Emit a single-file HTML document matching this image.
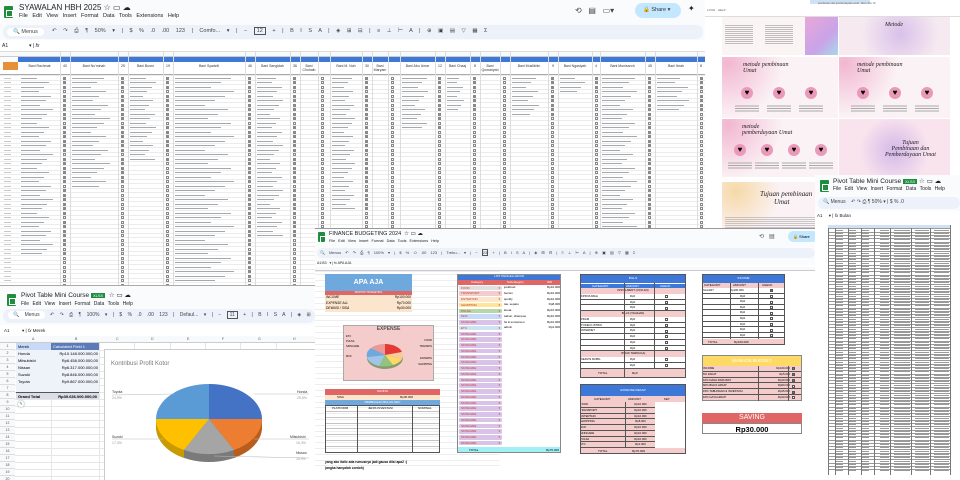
<!DOCTYPE html>
<html><head><meta charset="utf-8">
<style>
*{margin:0;padding:0;box-sizing:border-box}
body{width:960px;height:480px;overflow:hidden;background:#fff;font-family:"Liberation Sans",sans-serif;position:relative}
.abs{position:absolute}
.win{position:absolute;overflow:hidden;background:#fff}
.logo{position:absolute;width:9px;height:12px;background:#1e8e3e;border-radius:1px}
.logo:after{content:"";position:absolute;left:2px;top:4px;width:5px;height:5px;border:1px solid #fff}
.pill{position:absolute;background:#edf2fa;border-radius:8px}
.t{position:absolute;white-space:nowrap;color:#222}
.cb{position:absolute;width:3px;height:3px;border:0.5px solid #888}
.cbx{background:#8a8a8a}
</style></head><body>

<!-- TOP-LEFT SHEET -->
<div class="win" id="top" style="left:0;top:0;width:705px;height:290px;background:#f9fbfd">
 <div class="logo" style="left:4px;top:6px"></div>
 <div class="t" style="left:19px;top:3px;font-size:8px">SYAWALAN HBH 2025 ☆ ▭ ☁</div>
 <div class="t" style="left:19px;top:13px;font-size:5.5px;word-spacing:3px">File Edit View Insert Format Data Tools Extensions Help</div>
 <div class="pill" style="left:3px;top:25px;width:700px;height:14px"></div>
 <div class="t" style="left:7px;top:28px;font-size:5.5px;color:#444;background:#fff;border-radius:6px;padding:1px 6px">🔍 Menus</div>
 <div class="t" style="left:52px;top:28px;font-size:5.5px;color:#444;word-spacing:5px">↶ ↷ ⎙ ¶ 50% ▾ | $ % .0 .00 123 | Comfo... ▾ | − <span style="border:0.5px solid #555;padding:0 2px">12</span> + | B I S A | ◈ ⊞ ⊟ | ≡ ⊥ ⊢ A | ⊕ ▣ ▤ ▽ ▦ Σ</div>
 <div class="t" style="left:575px;top:6px;font-size:8px;color:#444">⟲ &nbsp; ▤ &nbsp; ▭▾</div>
 <div class="abs" style="left:635px;top:3px;width:46px;height:15px;background:#c2e7ff;border-radius:8px;font-size:5.5px;color:#333;padding:4px 0 0 8px">🔒 Share ▾</div>
 <div class="t" style="left:688px;top:4px;font-size:8px">✦</div>
 <div class="abs" style="left:0;top:40px;width:705px;height:12px;background:#fff;border-bottom:0.5px solid #ddd"></div>
 <div class="t" style="left:2px;top:43px;font-size:5px">A1 &nbsp;&nbsp;&nbsp;&nbsp;&nbsp;&nbsp;&nbsp;&nbsp;&nbsp;&nbsp;&nbsp;&nbsp;&nbsp;&nbsp;▾ | <i>fx</i></div>
 <div class="abs" style="left:0;top:52px;width:705px;height:5px;background:#f8f9fa;border-bottom:0.5px solid #ccc"></div>
 <div class="abs" style="left:18px;top:57px;width:687px;height:5px;background:#3d78d8"></div>
 <div class="abs" style="left:0;top:62px;width:705px;height:13px;background:#fff;border-bottom:0.5px solid #aaa"></div>
 <div class="abs" style="left:3px;top:62px;width:15px;height:8px;background:#e69138"></div>
 <div class="abs" style="left:0;top:75px;width:705px;height:215px;background:#fff"></div>
 <div id="topgrid"></div>
</div>

<!-- RIGHT IMAGES -->
<div class="win" style="left:705px;top:0;width:255px;height:240px;background:#fff">
 <div class="abs" style="left:0;top:0;width:255px;height:17px;background:#fff;border-bottom:0.5px solid #ddd"></div>
 <div class="t" style="left:2px;top:8px;font-size:3px;color:#666">LOUD &nbsp; HELP</div>
 <div class="abs" style="left:105px;top:0;width:60px;height:4px;background:#cfe2f3"></div>
 <div class="t" style="left:113px;top:2px;font-size:2.5px;color:#666">pembinaan dan pemberdayaan umat · Menu Pro 18</div>
 <div class="abs" style="left:17px;top:17px;width:83px;height:38px;background:#fbf4f5"></div>
 <div class="abs" style="left:100px;top:17px;width:33px;height:38px;background:linear-gradient(135deg,#e9a8d8,#c9a3e8 60%,#a8d8e8)"></div>
 <div class="abs" style="left:134px;top:17px;width:111px;height:38px;background:radial-gradient(circle at 55% 45%,#d9c0ea,#f6eaf0 60%)"></div>
 <div class="abs" style="left:17px;top:57px;width:116px;height:61px;background:radial-gradient(circle at 5% 10%,#f2b7d0,#fbf2f5 45%)"></div>
 <div class="abs" style="left:134px;top:57px;width:111px;height:61px;background:radial-gradient(circle at 5% 10%,#f2b7d0,#fbf2f5 45%)"></div>
 <div class="abs" style="left:17px;top:119px;width:116px;height:58px;background:radial-gradient(circle at 5% 10%,#f2b7d0,#fbf2f5 45%)"></div>
 <div class="abs" style="left:134px;top:119px;width:111px;height:58px;background:radial-gradient(circle at 50% 55%,#d4b8e8,#f9e4ee 55%)"></div>
 <div class="abs" style="left:17px;top:182px;width:116px;height:48px;background:radial-gradient(circle at 12% 20%,#f6d9a8,#fbf2f5 40%)"></div>
 <div id="hearts"></div>
 <div class="t" style="left:38px;top:62px;font-size:6px;font-style:italic;font-family:'Liberation Serif',serif">metode pembinaan<br>Umat</div>
 <div class="t" style="left:152px;top:62px;font-size:6px;font-style:italic;font-family:'Liberation Serif',serif">metode pembinaan<br>Umat</div>
 <div class="t" style="left:37px;top:124px;font-size:6px;font-style:italic;font-family:'Liberation Serif',serif">metode<br>pemberdayaan Umat</div>
 <div class="t" style="left:180px;top:140px;font-size:6px;font-style:italic;font-family:'Liberation Serif',serif;text-align:center">Tujuan<br>Pembinaan dan<br>Pemberdayaan Umat</div>
 <div class="t" style="left:55px;top:190px;font-size:7px;font-style:italic;font-family:'Liberation Serif',serif">Tujuan pembinaan<br>&nbsp;&nbsp;&nbsp;&nbsp;&nbsp;&nbsp;&nbsp;&nbsp;Umat</div>
 <div class="t" style="left:180px;top:22px;font-size:6px;font-style:italic;font-family:'Liberation Serif',serif">Metode</div>
</div>

<!-- RIGHT PIVOT -->
<div class="win" style="left:815px;top:175px;width:145px;height:305px;background:#f9fbfd">
 <div class="logo" style="left:5px;top:5px"></div>
 <div class="t" style="left:18px;top:2px;font-size:6.5px">Pivot Table Mini Course <span style="background:#1e8e3e;color:#fff;font-size:4px;padding:0 2px">XLSX</span> ☆ ▭ ☁</div>
 <div class="t" style="left:18px;top:11px;font-size:5px;word-spacing:2px">File Edit View Insert Format Data Tools Help</div>
 <div class="pill" style="left:3px;top:22px;width:142px;height:12px"></div>
 <div class="t" style="left:8px;top:24px;font-size:5px;color:#444">🔍 Menus &nbsp;&nbsp; ↶ ↷ ⎙ ¶ 50% ▾ | $ % .0</div>
 <div class="abs" style="left:0;top:36px;width:145px;height:10px;background:#fff"></div>
 <div class="t" style="left:2px;top:38px;font-size:4.5px">A1 &nbsp;&nbsp;&nbsp;&nbsp;▾ | <i>fx</i> Bulan</div>
 <div class="abs" style="left:0;top:46px;width:145px;height:259px;background:#fff"></div>
 <div id="rp" class="abs" style="left:13px;top:50px;width:132px;height:255px"></div>
</div>

<!-- FINANCE -->
<div class="win" style="left:315px;top:228px;width:500px;height:252px;background:#fff;border-top:1px solid #999">
 <div class="abs" style="left:0;top:0;width:500px;height:36px;background:#f9fbfd"></div>
 <div class="logo" style="left:3px;top:3px;width:7px;height:10px"></div>
 <div class="t" style="left:14px;top:2px;font-size:5.5px">FINANCE BUDGETING 2024 &nbsp;☆ ▭ ☁</div>
 <div class="t" style="left:14px;top:10px;font-size:3.8px;word-spacing:2px">File Edit View Insert Format Data Tools Extensions Help</div>
 <div class="t" style="left:444px;top:4px;font-size:6px;color:#555">⟲ &nbsp; ▤</div>
 <div class="abs" style="left:473px;top:2px;width:30px;height:11px;background:#c2e7ff;border-radius:6px;font-size:4px;padding:3px 0 0 5px">🔒 Share</div>
 <div class="pill" style="left:2px;top:19px;width:498px;height:10px"></div>
 <div class="t" style="left:5px;top:21px;font-size:4px;color:#444;word-spacing:3px">🔍 Menus ↶ ↷ ⎙ ¶ 100% ▾ | $ % .0 .00 123 | Trebu... ▾ | − <span style="border:0.5px solid #555">23</span> + | B I S A | ◈ ⊞ ⊟ | ≡ ⊥ ⊢ A | ⊕ ▣ ▤ ▽ ▦ Σ</div>
 <div class="t" style="left:2px;top:32px;font-size:3.5px">A1:B3 &nbsp;&nbsp;▾ | fx APA AJA</div>
 <div class="abs" style="left:0;top:38px;width:500px;height:4px;background:#f8f9fa;border-bottom:0.5px solid #ccc"></div>
 <div id="fin"></div>
</div>

<!-- BOTTOM-LEFT PIVOT -->
<div class="win" style="left:0;top:285px;width:315px;height:195px;background:#f9fbfd;border-top:1px solid #aaa">
 <div class="logo" style="left:7px;top:8px"></div>
 <div class="t" style="left:21px;top:5px;font-size:6.5px">Pivot Table Mini Course <span style="background:#1e8e3e;color:#fff;font-size:4px;padding:0 2px">XLSX</span> &nbsp;☆ ▭ ☁</div>
 <div class="t" style="left:21px;top:15px;font-size:5px;word-spacing:2px">File Edit View Insert Format Data Tools Help</div>
 <div class="pill" style="left:3px;top:23px;width:312px;height:14px"></div>
 <div class="t" style="left:8px;top:26px;font-size:5px;color:#444;word-spacing:4px"><span style="background:#fff;border-radius:5px;padding:1px 5px">🔍 Menus</span> ↶ ↷ ⎙ ¶ 100% ▾ | $ % .0 .00 123 | Defaul... ▾ | − <span style="border:0.5px solid #555;padding:0 2px">11</span> + | B I S A | ◈ ⊞</div>
 <div class="abs" style="left:0;top:39px;width:315px;height:11px;background:#fff"></div>
 <div class="t" style="left:4px;top:42px;font-size:4.5px">A1 &nbsp;&nbsp;&nbsp;&nbsp;&nbsp;&nbsp;&nbsp;&nbsp;&nbsp;▾ | <i>fx</i> Merek</div>
 <div class="abs" style="left:0;top:50px;width:315px;height:7px;background:#f8f9fa;border-bottom:0.5px solid #ccc;font-size:3.5px;color:#555">
  <span class="abs" style="left:32px;top:1px">A</span><span class="abs" style="left:75px;top:1px">B</span><span class="abs" style="left:116px;top:1px">C</span><span class="abs" style="left:151px;top:1px">D</span><span class="abs" style="left:187px;top:1px">E</span><span class="abs" style="left:222px;top:1px">F</span><span class="abs" style="left:258px;top:1px">G</span><span class="abs" style="left:293px;top:1px">H</span></div>
 <div id="bl" class="abs" style="left:0;top:57px;width:315px;height:138px;background:#fff"></div>
 <div class="abs" style="left:16px;top:57px;width:35px;height:7px;background:#c9daf8;font-size:4px;padding:1px 2px">Merek</div>
 <div class="abs" style="left:51px;top:57px;width:48px;height:7px;background:#5b7bb8;color:#fff;font-size:4px;padding:1px 2px">Calculated Field 1</div>
 <div class="abs" style="left:16px;top:64px;width:83px;height:42px;background:#eef2f9;font-size:4px;line-height:7px;padding-left:2px">Honda<br>Mitsubishi<br>Nissan<br>Suzuki<br>Toyota</div>
 <div class="abs" style="left:51px;top:64px;width:48px;height:42px;font-size:4px;line-height:7px;text-align:right;padding-right:1px">Rp10.148.000.000,00<br>Rp6.458.000.000,00<br>Rp6.317.000.000,00<br>Rp8.846.000.000,00<br>Rp9.867.000.000,00</div>
 <div class="abs" style="left:16px;top:106px;width:83px;height:7px;background:#d9dee7;border-top:1px solid #555;font-size:4px;font-weight:bold;padding:1px 2px">Grand Total<span style="float:right">Rp39.636.000.000,00</span></div>
 <div class="abs" style="left:18px;top:115px;width:6px;height:6px;border-radius:3px;background:#fff;box-shadow:0 0 2px #888;font-size:4px;color:#1e8e3e;text-align:center">✎</div>
 <div class="abs" style="left:104px;top:63px;width:212px;height:132px;background:#fff;border:0.7px solid #ccc"></div>
 <div class="t" style="left:111px;top:75px;font-size:6px;color:#777">Kontribusi Profit Kotor</div>
 <svg class="abs" style="left:104px;top:63px" width="212" height="132" viewBox="0 0 212 132">
  <g transform="translate(105,70)">
   <path d="M-53,0 L-53,8 A53,35 0 0 0 53,8 L53,0 Z" fill="#7a7a7a"/>
   <path d="M-53,0 L-53,8 A53,35 0 0 0 -25,39 L-25,31 Z" fill="#c99b00"/>
   <path d="M25,31 L25,39 A53,35 0 0 0 53,8 L53,0 Z" fill="#b85d1e"/>
   <path d="M0,0 L0,-35 A53,35 0 0 1 53,0 Z" fill="#4472c4"/>
   <path d="M0,0 L53,0 A53,35 0 0 1 25,31 Z" fill="#ed7d31"/>
   <path d="M0,0 L25,31 A53,35 0 0 1 -25,31 Z" fill="#a5a5a5"/>
   <path d="M0,0 L-25,31 A53,35 0 0 1 -53,0 Z" fill="#ffc000"/>
   <path d="M0,0 L-53,0 A53,35 0 0 1 0,-35 Z" fill="#5b9bd5"/>
  </g>
  <g stroke="#bbb" stroke-width="0.6"><line x1="8" y1="46" x2="70" y2="45"/><line x1="150" y1="45" x2="205" y2="45"/><line x1="8" y1="90" x2="60" y2="90"/><line x1="150" y1="90" x2="205" y2="90"/><line x1="110" y1="107" x2="205" y2="109"/></g>
  <g font-size="3.5" fill="#333" font-family="Liberation Sans"><text x="8" y="44">Toyota</text><text x="8" y="50" fill="#999">24,9%</text><text x="193" y="44">Honda</text><text x="193" y="50" fill="#999">25,6%</text><text x="8" y="89">Suzuki</text><text x="8" y="95" fill="#999">17,3%</text><text x="186" y="89">Mitsubishi</text><text x="192" y="95" fill="#999">16,3%</text><text x="192" y="105">Nissan</text><text x="192" y="111" fill="#999">15,9%</text></g>
 </svg>
</div>

<script>
function el(p,css,html,cls){var d=document.createElement('div');d.className=cls||'abs';d.style.cssText=css;if(html!=null)d.innerHTML=html;p.appendChild(d);return d;}
var tg=document.getElementById('topgrid');
var cols=[[19,60,0],[60,70,1],[70,118,0],[118,128,1],[128,163,0],[163,173,1],[173,245,0],[245,255,1],[255,290,0],[290,300,1],[300,318,0],[318,330,1],[330,362,0],[362,372,1],[372,388,0],[388,400,1],[400,435,0],[435,445,1],[445,470,0],[470,480,1],[480,500,0],[500,510,1],[510,548,0],[548,558,1],[558,592,0],[592,600,1],[600,645,0],[645,655,1],[655,697,0],[697,705,1]];
var counts=[40,25,19,46,36,0,30,0,12,8,0,9,4,45,8];
var hdr=['Bani Rachmat','Bani Nu\'minah','Bani Busro','Bani Syadzili','Bani Sangidah','Bani Chuhaih','Bani M. Nuh','Bani Maryam','Bani Abu Umar','Bani Chaaj','Bani Qomariyah','Bani Muslikhin','Bani Ngasiyah','Bani Munisaroh','Bani Ibrah'];
for(var r=0;r<47;r++){el(tg,'left:0;top:'+(75+r*4.5)+'px;width:705px;height:0.4px;background:#ececec');el(tg,'left:4px;top:'+(76+r*4.5+1.5)+'px;width:7px;height:1px;background:#c8c8c8');}
for(var i=0;i<cols.length;i++){var c=cols[i];
 el(tg,'left:'+c[1]+'px;top:52px;width:0.5px;height:238px;background:#ddd');
 var k=Math.floor(i/2);
 if(!c[2]){el(tg,'left:'+c[0]+'px;top:64px;width:'+(c[1]-c[0])+'px;font-size:3.5px;text-align:center;color:#333',hdr[k]);}
 else el(tg,'left:'+c[0]+'px;top:64px;width:'+(c[1]-c[0])+'px;font-size:3.5px;text-align:center;color:#333',String(counts[k]||''));
 for(var r=0;r<47;r++){var y=76+r*4.5;
  if(c[2]){var on=r<counts[k];el(tg,'left:'+(c[0]+3)+'px;top:'+(y+0.5)+'px',null,'cb'+(on&&(r%7!=3)?' cbx':''));}
  else if(r<counts[k]){var w=(c[1]-c[0]-6)*(0.45+0.5*((r*37+i*13)%10)/10);el(tg,'left:'+(c[0]+2)+'px;top:'+(y+1.6)+'px;width:'+w+'px;height:1px;background:#a4a9af');}
 }}
var h=document.getElementById('hearts');
[[42,95],[74,95],[106,95],[158,95],[190,95],[222,95],[35,152],[62,152],[89,152],[116,152]].forEach(function(p){el(h,'left:'+(p[0]-6)+'px;top:'+(p[1]-8)+'px;width:12px;height:12px;border-radius:6px;background:#ea9ab8;font-size:8px;text-align:center;line-height:12px','♥');el(h,'left:'+(p[0]-12)+'px;top:'+(p[1]+10)+'px;width:24px;height:8px;background:repeating-linear-gradient(#aaa 0 0.6px,transparent 0.6px 1.6px)');});
[[20,25],[60,25]].forEach(function(p){el(h,'left:'+p[0]+'px;top:'+p[1]+'px;width:28px;height:20px;background:repeating-linear-gradient(#888 0 0.6px,transparent 0.6px 2px)');});
el(h,'left:20px;top:217px;width:90px;height:12px;background:repeating-linear-gradient(#999 0 0.6px,transparent 0.6px 2px)');
var rp=document.getElementById('rp');
var pc=[0,7,20,33,46,62,83,102,122];
for(var r=0;r<75;r++){var y=r*3.3;el(rp,'left:0;top:'+y+'px;width:122px;height:0.4px;background:#999');
 for(var j=1;j<pc.length-1;j++){var ww=pc[j+1]-pc[j];var bw=(j>=5)?ww-5:ww*0.55;el(rp,'left:'+(pc[j]+(j>=4?ww-bw-1:1))+'px;top:'+(y+1.2)+'px;width:'+bw+'px;height:0.8px;background:#9a9a9a');}}
pc.forEach(function(x){el(rp,'left:'+x+'px;top:0;width:0.5px;height:250px;background:#777');});
el(rp,'left:0;top:0;width:122px;height:3.3px;background:#cfe2f3');
var bl=document.getElementById('bl');
for(var r=0;r<20;r++){el(bl,'left:0;top:'+(r*7)+'px;width:15px;height:7px;background:#f8f9fa;border-bottom:0.5px solid #ddd;font-size:3.5px;text-align:center;line-height:7px;color:#555',String(r+1));el(bl,'left:15px;top:'+(r*7+7)+'px;width:300px;height:0.4px;background:#e6e6e6');}
[51,99,134,170,205,240,276].forEach(function(x){el(bl,'left:'+x+'px;top:0;width:0.4px;height:140px;background:#e6e6e6');});
var f=document.getElementById('fin');
function F(x,y,w,hh,bg,txt,extra){return el(f,'left:'+(x-315)+'px;top:'+(y-228)+'px;width:'+w+'px;height:'+hh+'px;background:'+bg+';'+(extra||''),txt);}
F(0,270,500,1,'#eee');
for(var r=0;r<34;r++)F(0,273+r*5.8,500,0.4,'#eee');
F(325,273,87,17,'#6fa8dc','APA AJA','color:#fff;font-weight:bold;font-size:7px;text-align:center;line-height:17px');
F(325,290,87,4,'#e06666','MONTHLY BUDGETING','color:#fff;font-size:2.5px;text-align:center');
[['INCOME','Rp100.000'],['EXPENSE ALL','Rp70.000'],['DEWASI / SISA','Rp30.000']].forEach(function(a,i){F(325,294+i*5.7,87,5.7,'#fce5cd','<i style="position:absolute;left:1px">'+a[0]+'</i><span style="position:absolute;right:1px">'+a[1]+'</span>','font-size:3.3px');});
F(343,324,91,56,'#f4cccc','EXPENSE','font-weight:bold;font-size:5px;text-align:center;color:#555;border:0.5px solid #aaa');
el(f,'left:50px;top:112px;width:40px;height:30px','<svg width="40" height="30"><ellipse cx="20" cy="17" rx="18" ry="11" fill="#8a9a70"/><path d="M20,14 L20,3 A18,11 0 0 1 37,11Z" fill="#e53935"/><path d="M20,14 L37,11 A18,11 0 0 1 37,18Z" fill="#f9cb9c"/><path d="M20,14 L37,18 A18,11 0 0 1 28,24Z" fill="#ffd966"/><path d="M20,14 L28,24 A18,11 0 0 1 14,25Z" fill="#93c47d"/><path d="M20,14 L14,25 A18,11 0 0 1 2,16Z" fill="#9fc5e8"/><path d="M20,14 L2,16 A18,11 0 0 1 6,7Z" fill="#6fa8dc"/><path d="M20,14 L6,7 A18,11 0 0 1 20,3Z" fill="#ea9999"/></svg>');
F(346,333,15,24,'transparent','ETC<br>PULSA<br>SKINCARE<br><br>MCK','font-size:2.6px;line-height:5px');
F(410,337,22,30,'transparent','FOOD<br>TRANSPO<br><br>ENTERTA<br>SHOPPING','font-size:2.6px;line-height:6px;text-align:right');
F(325,388,115,6,'#e06666','SAVING','color:#fff;font-size:3px;text-align:center');
F(325,394,115,5,'#fce5cd','<span style="position:absolute;left:12px">SISA</span><span style="position:absolute;left:75px">Rp30.000</span>','font-size:3px');
F(325,399,115,5,'#6fa8dc','PEMBAGIAN BULAN DEC','color:#fff;font-size:3px;text-align:center');
F(325,404,115,48,'#fff','<span style="position:absolute;left:6px;top:0">PLATFORM</span><span style="position:absolute;left:42px">JENIS INVESTASI</span><span style="position:absolute;left:92px">NOMINAL</span>','font-size:3px;border:0.6px solid #555;background:repeating-linear-gradient(transparent 0 5.3px,#888 5.3px 5.8px)');
F(357,404,0.6,48,'#555');F(412,404,0.6,48,'#555');
F(325,459,200,5,'transparent','yang ako italic ada rumusnya jadi gausa diisi apa2 :)','font-size:3.3px;font-weight:bold');
F(325,465,200,5,'transparent','(angka hanyalah contoh)','font-size:3.3px;font-weight:bold');
F(457,273,104,6,'#3d78d8','LIST PENGELUARAN','color:#fff;font-size:3px;text-align:center');
F(457,279,104,5,'#e06666','<span style="position:absolute;left:14px">Category</span><span style="position:absolute;left:50px">Subcategory</span><span style="position:absolute;left:90px">IDR</span>','color:#fff;font-size:3px');
var cats=[['FOOD','#e0e0e0','junkfood','Rp10.000'],['TRANSPORT','#f4cccc','bensin','Rp10.000'],['ENTERTAIN','#fce5cd','spotify','Rp10.000'],['SHOPPING','#ffe599','tas, sepatu','Rp8.000'],['PULSA','#b6d7a8','kuota','Rp10.000'],['MCK','#c9daf8','sabun, shampoo','Rp10.000'],['SKINCARE','#d9c3e9','fw & sunscreen','Rp10.000'],['ETC','#cfe2f3','admin','Rp1.000']];
for(var r=0;r<28;r++){var y=284+r*5.75;var c=cats[r]||['SKINCARE','#d9c3e9','',''];
 F(459,y+0.6,43,4.6,c[1],c[0]+'<span style="position:absolute;right:2px">▾</span>','font-size:3px;color:#c0392b;padding-left:2px;border-radius:1px;line-height:4.6px');
 F(504,y,40,5.75,'transparent',c[2],'font-size:3px;line-height:5.75px');
 F(530,y,30,5.75,'transparent',c[3],'font-size:3px;text-align:right;line-height:5.75px');}
F(457,446,104,6,'#a2f0f5','<span style="position:absolute;left:12px">TOTAL</span><span style="position:absolute;right:2px">Rp70.000</span>','font-size:3px;line-height:6px');
F(457,273,104,179,'transparent','','border:1px solid #888');
F(580,273,106,9,'#3d78d8','BILLS','color:#fff;font-size:3px;text-align:center;line-height:9px');
F(580,282,106,5,'#3d78d8','<span style="position:absolute;left:12px">CATEGORY</span><span style="position:absolute;left:46px">AMOUNT</span><span style="position:absolute;left:80px">CHECK</span>','color:#fff;font-size:3px;border-top:0.5px solid #fff');
var bl2=[['h','INSTALMENT (CICILAN)'],['KPR RUMAH'],[''],[''],['h','BILLS (TAGIHAN)'],['PDAM'],['TOKEN LISTRIK'],['INTERNET'],[''],[''],[''],['h','(TIDAK TERDUGA)'],['SERVIS MOBIL'],['']];
bl2.forEach(function(b,i){var y=287+i*5.75;if(b[0]=='h')F(580,y,106,5.75,'#f4cccc',b[1],'font-size:2.8px;text-align:center;line-height:5.75px');else{F(580,y,106,5.75,'#fff','<span style="position:absolute;left:1px">'+b[0]+'</span><span style="position:absolute;left:50px">Rp0</span>','font-size:2.8px;line-height:5.75px;border-bottom:0.5px solid #555');F(665,y+1.4,3,3,'#fff','','border:0.5px solid #555');}});
F(580,368,106,9,'#f4cccc','<span style="position:absolute;left:18px">TOTAL</span><span style="position:absolute;left:52px">Rp0</span>','font-size:3px;line-height:9px');
F(580,273,106,104,'transparent','','border:1px solid #555');F(624,282,0.6,95,'#555');F(654,282,0.6,86,'#555');
F(580,383,106,12,'#3d78d8','EXPENSE REKAP','color:#fff;font-size:3px;text-align:center;line-height:12px');
F(580,395,106,6,'#f4cccc','<span style="position:absolute;left:14px">CATEGORY</span><span style="position:absolute;left:48px">AMOUNT</span><span style="position:absolute;left:84px">KET</span>','font-size:3px;line-height:6px');
['FOOD','TRANSPORT','ENTERTAIN','SHOPPING','MCK','SKINCARE','PULSA','ETC'].forEach(function(n,i){var y=401+i*5.75;F(580,y,45,5.75,'#f4cccc',n,'font-size:2.8px;line-height:5.75px;border-bottom:0.5px solid #555');F(625,y,30,5.75,'#f4cccc',i==7?'Rp1.000':(i==3?'Rp8.000':'Rp10.000'),'font-size:2.8px;text-align:center;line-height:5.75px;border-bottom:0.5px solid #555;border-left:0.5px solid #555');});
F(580,447,106,6,'#f4cccc','<span style="position:absolute;left:18px">TOTAL</span><span style="position:absolute;left:52px">Rp70.000</span>','font-size:3px;line-height:6px');
F(580,383,106,70,'transparent','','border:1px solid #555');
F(702,273,83,9,'#3d78d8','INCOME','color:#fff;font-size:3px;text-align:center;line-height:9px');
F(702,282,83,5,'#f4cccc','<span style="position:absolute;left:2px">CATEGORY</span><span style="position:absolute;left:31px">AMOUNT</span><span style="position:absolute;left:60px">CHECK</span>','font-size:3px');
for(var i=0;i<9;i++){var y=287+i*5.6;F(702,y,83,5.6,'#fff','<span style="position:absolute;left:1px">'+(i==0?'SALARY':'')+'</span><span style="position:absolute;left:'+(i==0?28:38)+'px">'+(i==0?'Rp100.000':'Rp0')+'</span>','font-size:2.8px;line-height:5.6px;border-bottom:0.5px solid #555');F(770,y+1.3,3,3,i==0?'#777':'#fff','','border:0.5px solid #555');}
F(702,338,83,6,'#f4cccc','<span style="position:absolute;left:6px">TOTAL</span><span style="position:absolute;left:32px">Rp100.000</span>','font-size:3px;line-height:6px');
F(702,273,83,71,'transparent','','border:1px solid #555');F(730,282,0.6,56,'#555');F(758,282,0.6,56,'#555');
F(702,354,100,11,'#ffd966','MANAGE BUDGET','color:#fff;font-size:4.5px;text-align:center;line-height:11px');
[['INCOME','Rp100.000',1],['5% ZAKAT','Rp5.000',1],['10% DANA DARURAT','Rp10.000',1],['60% BIAYA HIDUP','Rp60.000',0],['15% TABUNGAN & INVESTASI','Rp15.000',1],['10% GAYA HIDUP','Rp10.000',0]].forEach(function(a,i){var y=365+i*5.8;F(702,y,100,5.8,'#f4cccc','<span style="position:absolute;left:1px">'+a[0]+'</span><span style="position:absolute;left:60px;width:28px;text-align:right">'+a[1]+'</span>','font-size:2.8px;line-height:5.8px;border-bottom:0.5px solid #555');F(792,y+1.4,3,3,a[2]?'#777':'#fff','','border:0.5px solid #555');});
F(702,354,100,46,'transparent','','border:1px solid #888');F(758,365,0.6,35,'#555');F(788,365,0.6,35,'#555');
F(702,412,100,10,'#e06666','SAVING','color:#fff;font-size:7px;text-align:center;line-height:10px');
F(702,422,100,11,'#fff','Rp30.000','font-size:7.5px;font-weight:bold;text-align:center;line-height:11px;border:1px solid #888');
</script>
</body></html>
